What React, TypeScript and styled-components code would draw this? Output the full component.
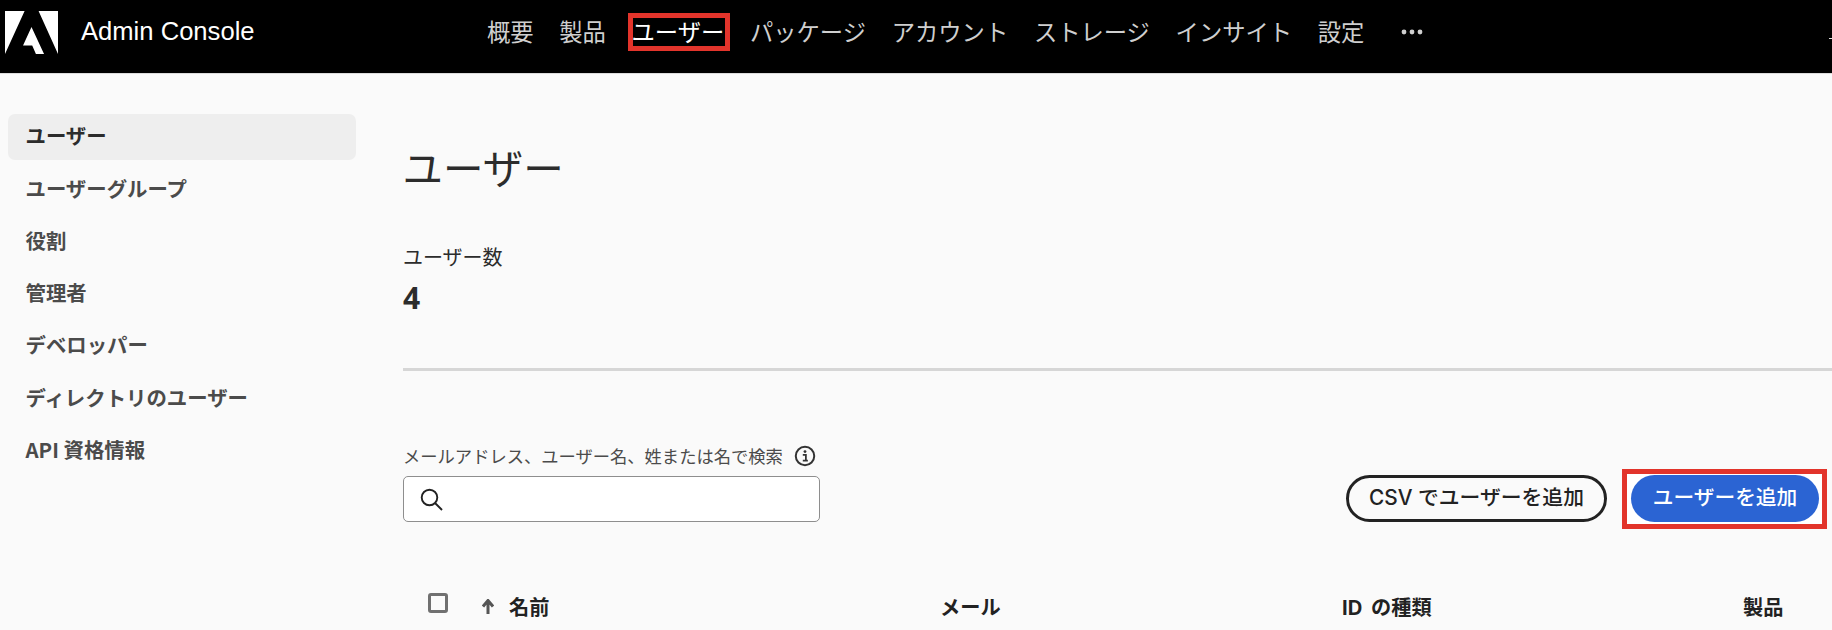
import React from "react";
import styled, { createGlobalStyle } from "styled-components";

const CJK = `"Noto Sans CJK JP", sans-serif`;
const LATIN = `"Liberation Sans", "Noto Sans CJK JP", sans-serif`;
const UI = `Inter, "Noto Sans CJK JP", sans-serif`;

const Global = createGlobalStyle`
  html, body { margin: 0; padding: 0; background: #fafafa; }
  body { font-family: ${CJK}; color: #222; }
  * { box-sizing: border-box; }
`;

const Page = styled.div`
  width: 1832px;
  height: 630px;
  overflow: hidden;
  display: flex;
  flex-direction: column;
`;

const Header = styled.header`
  height: 74px;
  flex: none;
  background: #000;
  border-bottom: 1px solid #dcdcdc;
  display: flex;
  align-items: center;
  padding: 0 0 9px 5px;
`;

const Brand = styled.div`
  width: 482px;
  flex: none;
  display: flex;
  align-items: center;
  gap: 23px;
`;

const LogoMark = styled.svg`
  width: 53px;
  height: 43px;
  display: block;
`;

const BrandName = styled.span`
  font: 400 25.6px/1 ${LATIN};
  color: #fff;
`;

const Nav = styled.nav`
  display: flex;
  align-items: center;
  gap: 25.7px;
`;

const NavItem = styled.span<{ $boxed?: boolean }>`
  position: relative;
  font: 400 23.3px/30px ${CJK};
  color: ${(p) => (p.$boxed ? "#fff" : "#cfcfcf")};
  white-space: nowrap;
  top: -1px;
  &::after {
    content: ${(p) => (p.$boxed ? '""' : "none")};
    position: absolute;
    inset: -3px -6px -5px -4px;
    border: 5px solid #e2342b;
  }
`;

const MoreDots = styled.svg`
  width: 24px;
  height: 6px;
  margin-left: 10px;
  display: block;
`;

const EdgeMark = styled.span`
  width: 3px;
  height: 1px;
  background: #ddd;
  margin-left: auto;
  margin-top: 12px;
`;

const Body = styled.div`
  flex: 1;
  display: flex;
  min-height: 0;
`;

const Sidebar = styled.aside`
  width: 403px;
  flex: none;
  padding: 40px 47px 0 8px;
  display: flex;
  flex-direction: column;
  gap: 6.3px;
`;

const SideItem = styled.div<{ $active?: boolean }>`
  height: 46px;
  padding: 0 0 3px 17.5px;
  display: flex;
  align-items: center;
  border-radius: 7px;
  background: ${(p) => (p.$active ? "#eeeeee" : "transparent")};
  color: ${(p) => (p.$active ? "#2c2c2c" : "#4b4b4b")};
  font: 700 20.4px/1 ${CJK};
  white-space: nowrap;
`;

const Main = styled.main`
  flex: 1;
  min-width: 0;
  padding: 68px 5px 0 0;
`;

const Title = styled.h1`
  margin: 0 0 0 -0.5px;
  font: 400 40.5px/50px ${CJK};
  color: #2c2c2c;
`;

const StatLabel = styled.div`
  margin-top: 53px;
  font: 400 20px/24px ${CJK};
  color: #2c2c2c;
`;

const StatValue = styled.div`
  margin-top: 11px;
  font: 700 30px/36px "Noto Sans", sans-serif;
  color: #2c2c2c;
`;

const Divider = styled.hr`
  margin: 52px -5px 0 0;
  border: 0;
  height: 3px;
  background: #d6d6d6;
`;

const Toolbar = styled.div`
  margin-top: 73px;
  display: flex;
  align-items: flex-end;
  justify-content: space-between;
`;

const SearchGroup = styled.div`
  display: flex;
  flex-direction: column;
  gap: 8px;
`;

const SearchLabel = styled.div`
  display: flex;
  align-items: center;
  gap: 11px;
  font: 400 17.3px/24px ${CJK};
  color: #4b4b4b;
`;

const InfoIcon = styled.svg`
  width: 22px;
  height: 22px;
  display: block;
`;

const SearchBox = styled.div`
  width: 417px;
  height: 46px;
  background: #fff;
  border: 1.5px solid #8e8e8e;
  border-radius: 5px;
  display: flex;
  align-items: center;
  padding-left: 16px;
`;

const Actions = styled.div`
  display: flex;
  align-items: flex-end;
  gap: 15px;
`;

const OutlineButton = styled.button`
  height: 47px;
  width: 261px;
  padding: 0;
  background: transparent;
  border: 3px solid #222;
  border-radius: 24px;
  color: #222;
  font: 500 20.8px/1 ${UI};
  white-space: nowrap;
`;

const CalloutBox = styled.div`
  border: 5px solid #e2342b;
  background: #fff;
  padding: 1px 3px 2px 4px;
  margin-bottom: -7px;
`;

const PrimaryButton = styled.button`
  display: block;
  width: 188px;
  height: 47px;
  padding: 0;
  border: 0;
  border-radius: 24px;
  background: #2b64d3;
  color: #fff;
  font: 500 20.7px/1 ${UI};
  white-space: nowrap;
`;

const TableHead = styled.div`
  margin-top: 71px;
  height: 30px;
  display: grid;
  grid-template-columns: 79px 458px 402px 401px 1fr;
  align-items: center;
  font: 700 20.2px/30px ${UI};
  word-spacing: 4px;
  color: #222;
`;

const CheckCell = styled.div`
  padding-left: 25px;
`;

const CheckBox = styled.span`
  display: block;
  width: 20px;
  height: 20px;
  margin-top: -11px;
  border: 3px solid #707070;
  border-radius: 3px;
`;

const NameHead = styled.div`
  display: flex;
  align-items: center;
  gap: 15px;
`;

const SortArrow = styled.svg`
  width: 12px;
  height: 15px;
  display: block;
  margin-top: -4px;
`;

const navItems = ["概要", "製品", "ユーザー", "パッケージ", "アカウント", "ストレージ", "インサイト", "設定"];
const sideItems = ["ユーザー", "ユーザーグループ", "役割", "管理者", "デベロッパー", "ディレクトリのユーザー", "API 資格情報"];

export default function App() {
  return (
    <Page>
      <Global />
      <Header>
        <Brand>
          <LogoMark viewBox="0 0 30 26" preserveAspectRatio="none" aria-label="Adobe">
            <path fill="#fff" d="M19 0h11v26zM11.1 0H0v26zM15 9.6 22.1 26h-4.6l-2.1-5.2h-5.2z" />
          </LogoMark>
          <BrandName>Admin Console</BrandName>
        </Brand>
        <Nav>
          {navItems.map((n) => (
            <NavItem key={n} $boxed={n === "ユーザー"}>{n}</NavItem>
          ))}
          <MoreDots viewBox="0 0 24 6">
            <circle cx="4" cy="3" r="2.4" fill="#cfcfcf" />
            <circle cx="12" cy="3" r="2.4" fill="#cfcfcf" />
            <circle cx="20" cy="3" r="2.4" fill="#cfcfcf" />
          </MoreDots>
        </Nav>
        <EdgeMark />
      </Header>
      <Body>
        <Sidebar>
          {sideItems.map((s, i) => (
            <SideItem key={s} $active={i === 0}>{s}</SideItem>
          ))}
        </Sidebar>
        <Main>
          <Title>ユーザー</Title>
          <StatLabel>ユーザー数</StatLabel>
          <StatValue>4</StatValue>
          <Divider />
          <Toolbar>
            <SearchGroup>
              <SearchLabel>
                メールアドレス、ユーザー名、姓または名で検索
                <InfoIcon viewBox="0 0 20 20">
                  <circle cx="10" cy="10" r="8.4" fill="none" stroke="#333" strokeWidth="1.8" />
                  <circle cx="10" cy="6" r="1.3" fill="#333" />
                  <path d="M8 9h2.8v5M8 14.3h4.6" fill="none" stroke="#333" strokeWidth="1.6" />
                </InfoIcon>
              </SearchLabel>
              <SearchBox>
                <svg width="23" height="23" viewBox="0 0 23 23">
                  <circle cx="9.5" cy="9.5" r="7.8" fill="none" stroke="#222" strokeWidth="1.9" />
                  <path d="M15 15l7 7" stroke="#222" strokeWidth="1.9" fill="none" />
                </svg>
              </SearchBox>
            </SearchGroup>
            <Actions>
              <OutlineButton>CSV でユーザーを追加</OutlineButton>
              <CalloutBox>
                <PrimaryButton>ユーザーを追加</PrimaryButton>
              </CalloutBox>
            </Actions>
          </Toolbar>
          <TableHead>
            <CheckCell><CheckBox /></CheckCell>
            <NameHead>
              <SortArrow viewBox="0 0 12 15">
                <path d="M6 15V3.5M1 7.5l5-6 5 6" fill="none" stroke="#555" strokeWidth="3" />
              </SortArrow>
              名前
            </NameHead>
            <div>メール</div>
            <div>ID の種類</div>
            <div>製品</div>
          </TableHead>
        </Main>
      </Body>
    </Page>
  );
}
